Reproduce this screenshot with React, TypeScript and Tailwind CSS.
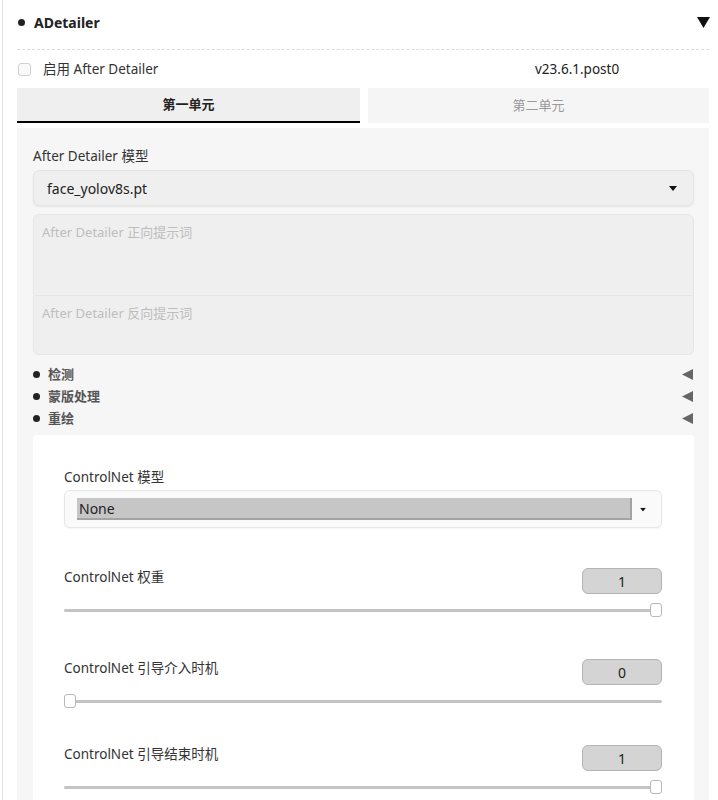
import React from "react";

const FONT = { fontFamily: '"Noto Sans", "Noto Sans CJK SC", sans-serif' };

function Caret({ className = "" }: { className?: string }) {
  return (
    <svg width="8" height="5" viewBox="0 0 8 5" className={className}>
      <path d="M0 0h8L4 5z" fill="#111" />
    </svg>
  );
}

function Accordion({ label }: { label: string }) {
  return (
    <div className="flex items-center h-[22px]">
      <span className="w-[7px] h-[7px] rounded-full bg-[#222] shrink-0" />
      <span className="ml-[8px] text-[13px] font-semibold text-[#555] leading-none">{label}</span>
      <svg width="11" height="11" viewBox="0 0 11 11" className="ml-auto mr-[1px]">
        <path d="M11 0v11L0 5.5z" fill="#666" />
      </svg>
    </div>
  );
}

function SliderBlock({ label, value, pos, mt }: { label: string; value: string; pos: "start" | "end"; mt: string }) {
  return (
    <div className={mt}>
      <div className="flex items-start justify-between">
        <span className="text-[13.5px] leading-[18px] text-[#333]">{label}</span>
        <div className="w-[80px] h-[26px] rounded-md bg-[#d4d4d4] border border-[#b4b4b4] flex items-center justify-center text-[14px] text-[#222]">
          {value}
        </div>
      </div>
      <div className="relative mt-[9px] h-[14px]">
        <div className="absolute left-0 right-0 top-[6px] h-[3px] bg-[#c4c4c4] rounded-full" />
        <div
          className={`absolute top-0 w-[12px] h-[14px] rounded-[3px] bg-white border border-[#b8b8b8] ${pos === "end" ? "right-0" : "left-0"}`}
        />
      </div>
    </div>
  );
}

export default function App() {
  return (
    <div style={FONT} className="w-[718px] h-[800px] overflow-hidden bg-white">
      <div className="ml-[2px] h-full border-l border-[#e3e3e3] pl-[14px] pr-[9px]">
        {/* header */}
        <div className="flex items-center h-[50px] pb-[4px] border-b border-dashed border-[#dcdcdc] pl-[1px]">
          <span className="w-[7px] h-[7px] rounded-full bg-[#222]" />
          <span className="ml-[9px] text-[14px] font-bold text-[#222]">ADetailer</span>
          <svg width="13" height="11" viewBox="0 0 13 11" className="ml-auto mr-[-1px]">
            <path d="M0 0h13L6.5 11z" fill="#111" />
          </svg>
        </div>

        {/* enable row */}
        <div className="grid grid-cols-[343px_1fr] gap-[8px] h-[38px] items-center">
          <label className="flex items-center pl-[1px]">
            <span className="w-[13px] h-[13px] rounded-[3px] border border-[#d0d0d0] bg-[#f9f9f9]" />
            <span className="ml-[12px] text-[13.5px] text-[#333]">启用 After Detailer</span>
          </label>
          <span className="pl-[167px] text-[13.5px] text-[#222]">v23.6.1.post0</span>
        </div>

        {/* tabs */}
        <div className="grid grid-cols-[343px_1fr] gap-[8px]">
          <div className="h-[35px] bg-[#efefef] border-b-2 border-black flex items-center justify-center text-[13px] font-semibold text-[#222]">
            第一单元
          </div>
          <div className="h-[35px] bg-[#f5f5f5] flex items-center justify-center text-[13px] text-[#999]">第二单元</div>
        </div>

        {/* unit panel */}
        <div className="mt-[5px] h-[700px] bg-[#f6f6f6] pl-[16px] pr-[15px] pt-[19px]">
          <div className="text-[13.5px] leading-[18px] text-[#333]">After Detailer 模型</div>
          <div className="mt-[5px] h-[36px] rounded-md bg-[#efefef] border border-[#e4e4e4] shadow-[0_1px_2px_rgba(0,0,0,0.06)] flex items-center pl-[13px] pr-[16px]">
            <span className="text-[14px] text-[#222]">face_yolov8s.pt</span>
            <Caret className="ml-auto" />
          </div>

          <div className="mt-[8px] h-[82px] rounded-t-md bg-[#efefef] border border-[#e6e6e6] pl-[8px] pt-[8px] text-[13px] text-[#bdbdbd]">
            After Detailer 正向提示词
          </div>
          <div className="h-[59px] rounded-b-md bg-[#efefef] border border-t-0 border-[#e6e6e6] pl-[8px] pt-[8px] text-[13px] text-[#bdbdbd]">
            After Detailer 反向提示词
          </div>

          <div className="mt-[8px]">
            <Accordion label="检测" />
            <Accordion label="蒙版处理" />
            <Accordion label="重绘" />
          </div>

          {/* controlnet panel */}
          <div className="mt-[6px] h-[400px] bg-white rounded-t-sm pl-[31px] pr-[32px] pt-[33px]">
            <div className="text-[13.5px] leading-[18px] text-[#333]">ControlNet 模型</div>
            <div className="mt-[4px] h-[38px] rounded-md bg-[#fafafa] border border-[#e6e6e6] shadow-[0_1px_2px_rgba(0,0,0,0.05)] flex items-center pl-[12px] pr-[14px]">
              <div className="w-[555px] h-[22px] bg-[#c6c6c6] border-b-2 border-r-2 border-[#a3a3a3] flex items-center pl-[2px] text-[14px] text-[#222]">
                None
              </div>
              <Caret className="ml-auto scale-75" />
            </div>

            <SliderBlock label="ControlNet 权重" value="1" pos="end" mt="mt-[40px]" />
            <SliderBlock label="ControlNet 引导介入时机" value="0" pos="start" mt="mt-[42px]" />
            <SliderBlock label="ControlNet 引导结束时机" value="1" pos="end" mt="mt-[37px]" />
          </div>
        </div>
      </div>
    </div>
  );
}
